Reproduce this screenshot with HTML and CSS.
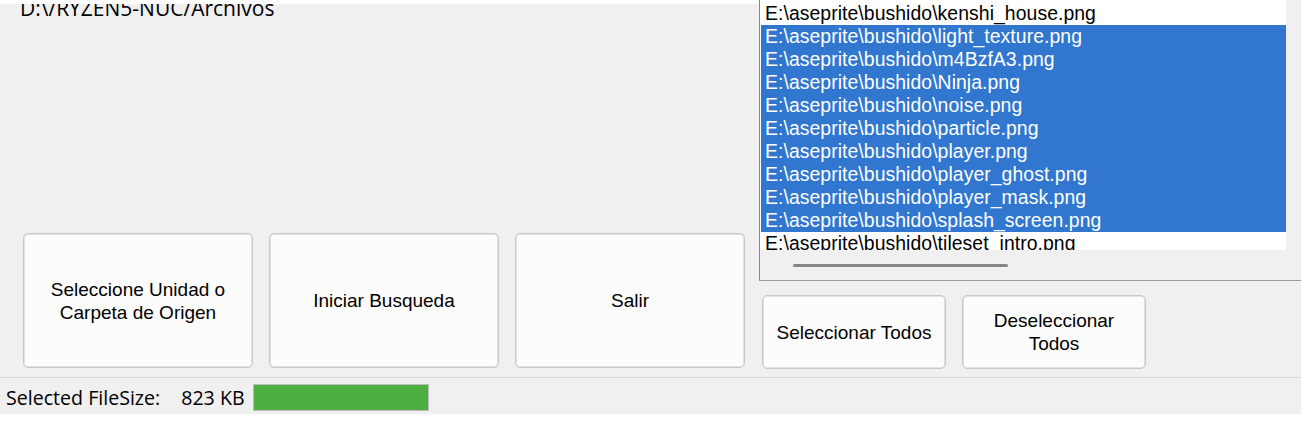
FILE: index.html
```html
<!DOCTYPE html>
<html>
<head>
    <title>Buscador de Archivos</title>
    <link rel="stylesheet" href="styles.css">
</head>
<body>
    <div class="window">
        <div class="main">
            <div class="left">
                <div class="path">D:\/RYZEN5-NUC/Archivos</div>
                <div class="actions">
                    <button class="btn big">Seleccione Unidad o<br>Carpeta de Origen</button>
                    <button class="btn big">Iniciar Busqueda</button>
                    <button class="btn big">Salir</button>
                </div>
            </div>

            <div class="right">
                <div class="listbox">
                    <div class="client">
                        <ul class="items">
                            <li>E:\aseprite\bushido\kenshi_house.png</li>
                            <li class="sel">E:\aseprite\bushido\light_texture.png</li>
                            <li class="sel">E:\aseprite\bushido\m4BzfA3.png</li>
                            <li class="sel">E:\aseprite\bushido\Ninja.png</li>
                            <li class="sel">E:\aseprite\bushido\noise.png</li>
                            <li class="sel">E:\aseprite\bushido\particle.png</li>
                            <li class="sel">E:\aseprite\bushido\player.png</li>
                            <li class="sel">E:\aseprite\bushido\player_ghost.png</li>
                            <li class="sel">E:\aseprite\bushido\player_mask.png</li>
                            <li class="sel">E:\aseprite\bushido\splash_screen.png</li>
                            <li>E:\aseprite\bushido\tileset_intro.png</li>
                        </ul>
                    </div>
                    <div class="vscroll"></div>
                    <div class="hscroll"><div class="thumb"></div></div>
                    <div class="corner"></div>
                </div>
                <div class="select-actions">
                    <button class="btn small">Seleccionar Todos</button>
                    <button class="btn small">Deseleccionar<br>Todos</button>
                </div>
            </div>
        </div>

        <div class="statusbar">
            <span class="label">Selected FileSize:</span>
            <span class="size">823 KB</span>
            <div class="progress"><div class="fill" style="width: 100%"></div></div>
        </div>
    </div>
</body>
</html>
```

FILE: styles.css
```css
body {
    margin: 0;
    background: #ffffff;
    color: #000;
    font-family: "Liberation Sans", Arial, sans-serif;
}
.window {
    width: 1301px;
    background: #f0f0f0;
}
.main {
    display: flex;
    height: 377px;
    border-bottom: 1px solid #d9d9d9;
}
.left {
    width: 759px;
    border-top: 4px solid #ffffff;
    box-sizing: border-box;
    overflow: hidden;
    display: flex;
    flex-direction: column;
    justify-content: space-between;
    padding: 0 0 9px 23px;
}
.path {
    margin-top: -10px;
    margin-left: -3px;
    font-family: "Open Sans", sans-serif;
    font-size: 21px;
    line-height: 29px;
    white-space: nowrap;
}
.actions {
    display: flex;
    gap: 16px;
}
.btn {
    background: #fcfcfc;
    border: 1px solid #c8c8c8;
    box-shadow: inset 0 0 0 1px #e2e2e2;
    border-radius: 5px;
    font-family: "Liberation Sans", Arial, sans-serif;
    font-size: 19px;
    line-height: 23px;
    color: #000;
    padding: 0;
}
.btn.big {
    width: 230px;
    height: 135px;
}
.btn.small {
    width: 184px;
    height: 74px;
}
.right {
    flex: 1;
    display: flex;
    flex-direction: column;
}
.listbox {
    display: grid;
    grid-template-columns: 526px 1fr;
    grid-template-rows: 250px 30px;
    border-left: 1px solid #828790;
    border-bottom: 1px solid #9a9a9a;
}
.client {
    background: #ffffff;
    overflow: hidden;
    padding: 2px 0 0 1px;
}
.items {
    list-style: none;
    margin: 0;
    padding: 0;
    font-size: 19.4px;
    letter-spacing: 0.06px;
    line-height: 23px;
    white-space: nowrap;
}
.items li {
    padding-left: 4px;
}
.items li.sel {
    background: #3177d0;
    color: #ffffff;
}
.vscroll, .corner {
    background: #f0f0f0;
}
.hscroll {
    display: flex;
    align-items: center;
    padding-left: 33px;
}
.hscroll .thumb {
    width: 215px;
    height: 3px;
    border-radius: 2px;
    background: #868686;
}
.select-actions {
    display: flex;
    gap: 16px;
    margin: 14px 0 0 3px;
}
.statusbar {
    display: flex;
    align-items: center;
    height: 36px;
    padding: 2px 0 0 6px;
    box-sizing: border-box;
    font-family: "Open Sans", sans-serif;
    font-size: 19.6px;
}
.size {
    margin-left: 21px;
}
.progress {
    width: 174px;
    height: 25px;
    margin-left: 8px;
    border: 1px solid #bcbcbc;
    background: #e6e6e6;
}
.fill {
    height: 100%;
    background: #4caf3f;
}
```
